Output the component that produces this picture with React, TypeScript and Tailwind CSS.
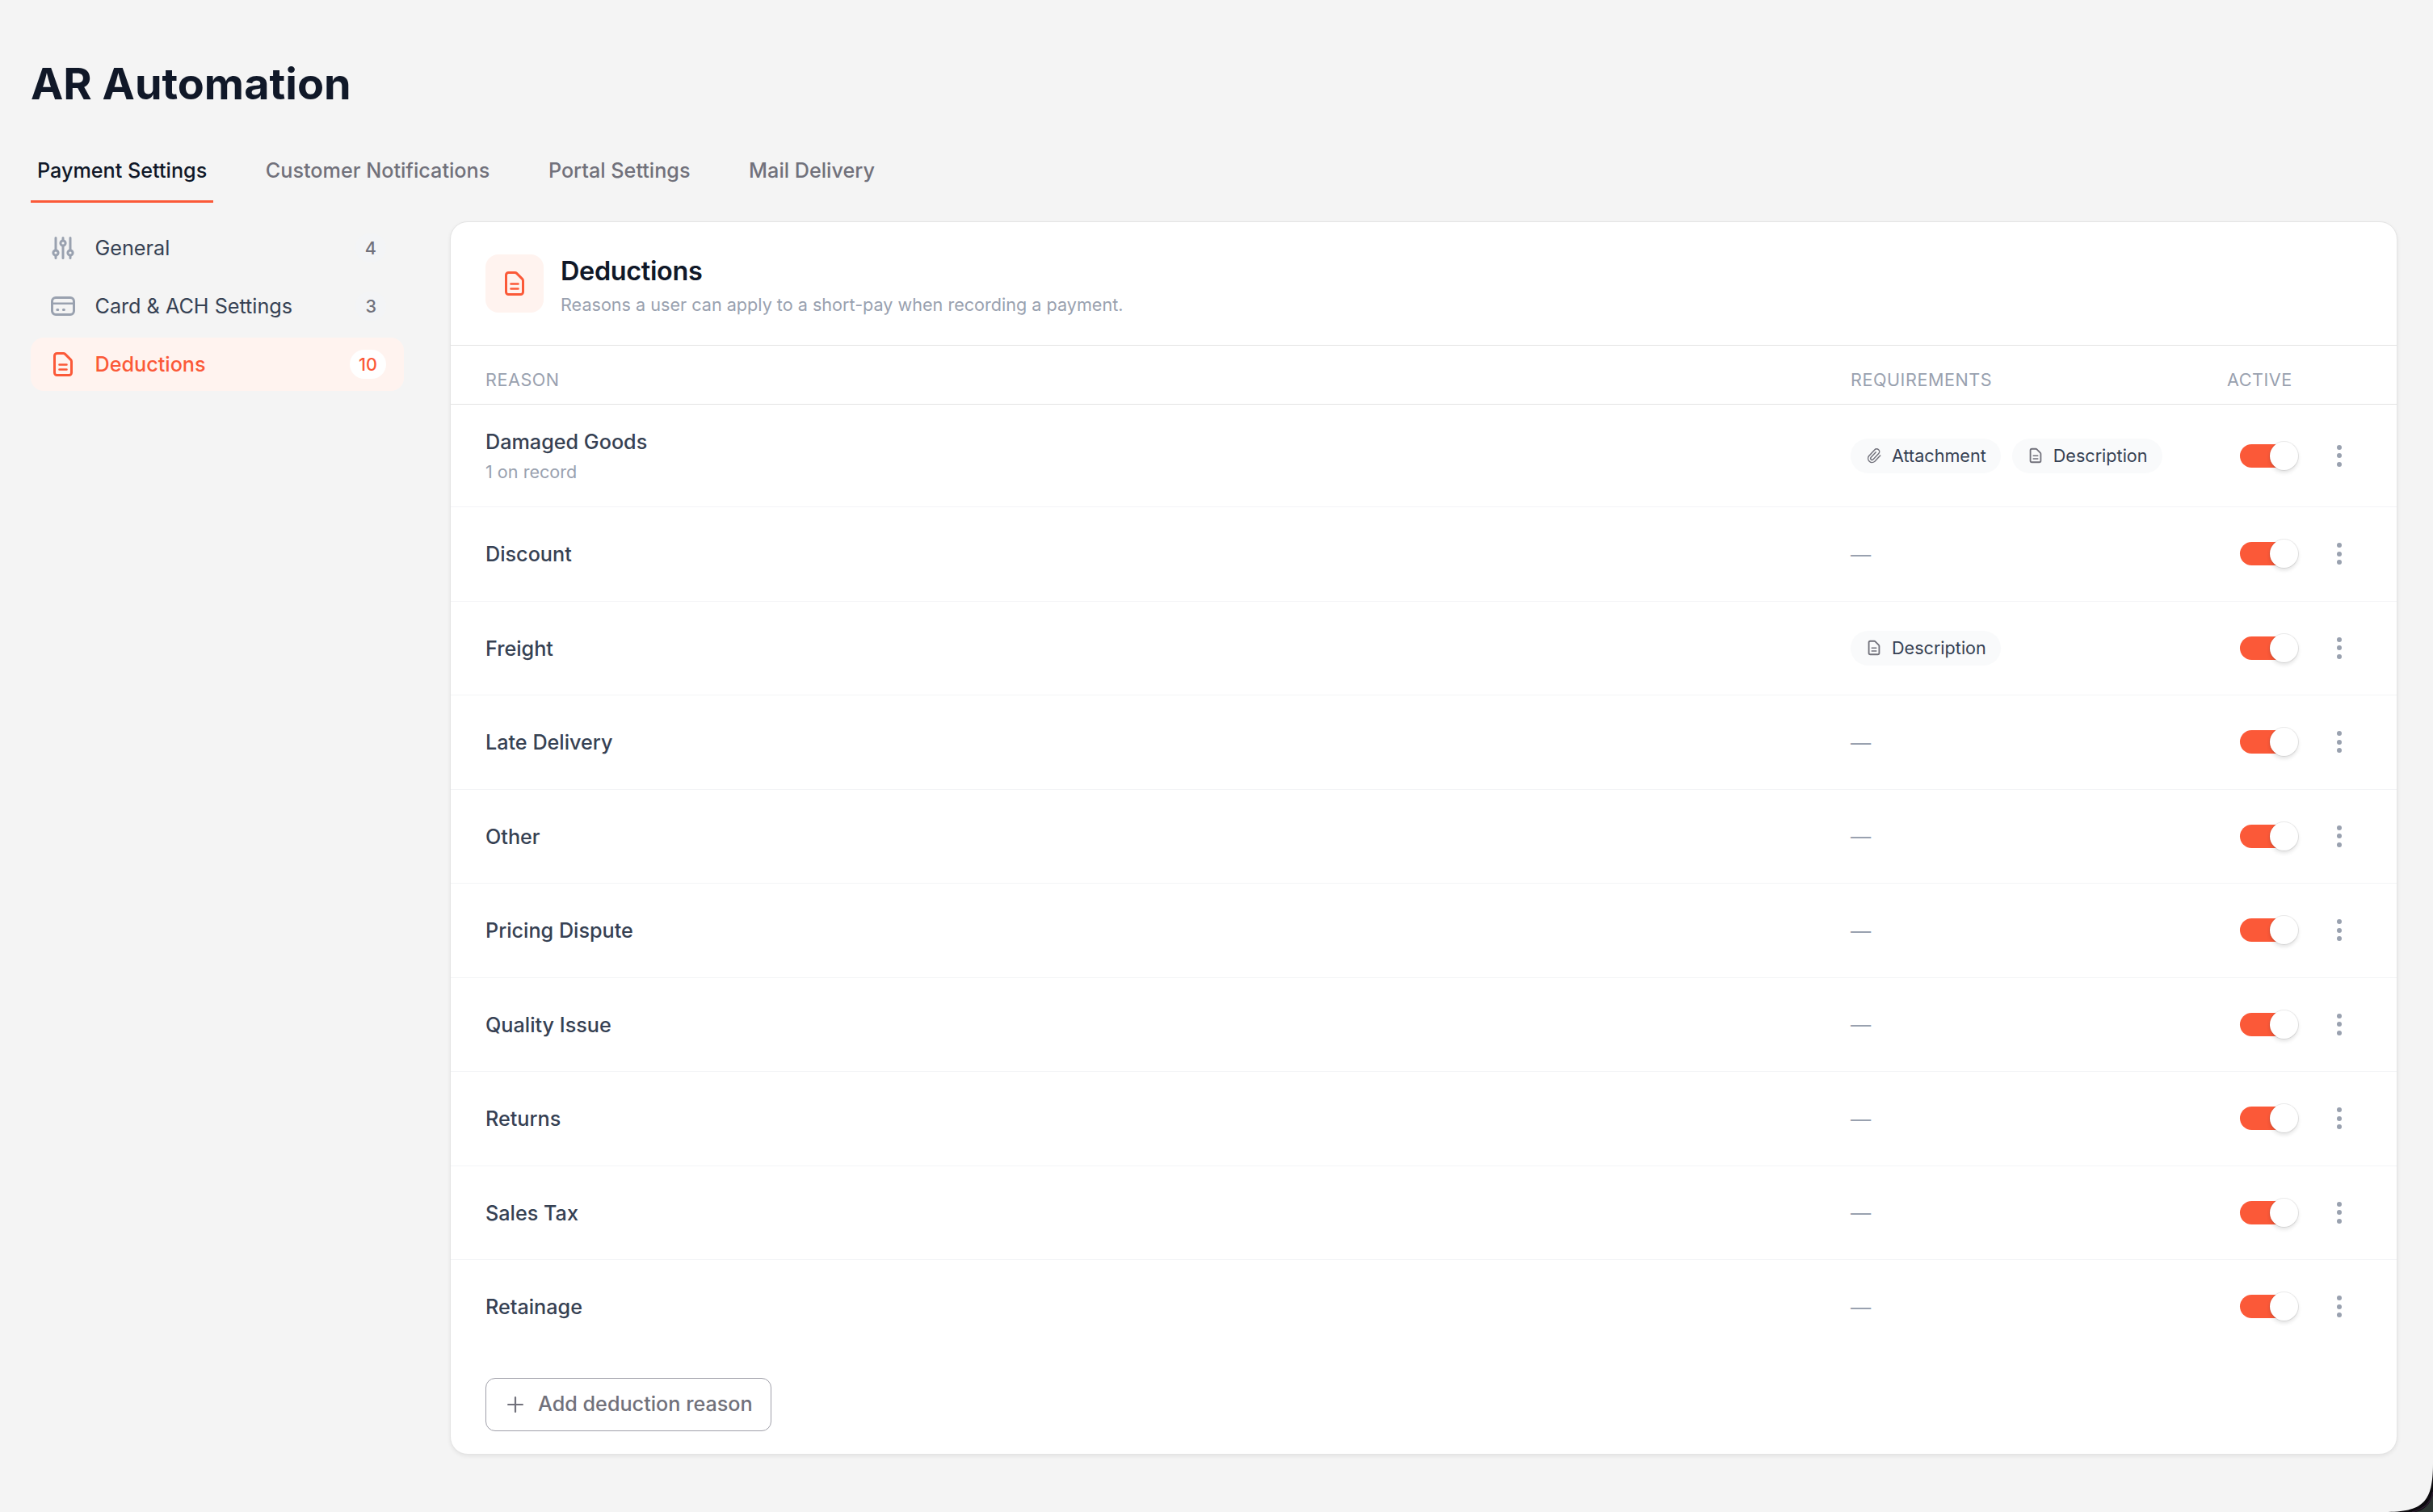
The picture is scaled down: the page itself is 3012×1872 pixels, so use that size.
import { useState } from "react";
import type { ReactNode } from "react";

type TRequirement = "Attachment" | "Description";

type TReason = {
    name: string;
    note?: string;
    requirements: TRequirement[];
};

const tabs = ["Payment Settings", "Customer Notifications", "Portal Settings", "Mail Delivery"];

const reasons: TReason[] = [
    { name: "Damaged Goods", note: "1 on record", requirements: ["Attachment", "Description"] },
    { name: "Discount", requirements: [] },
    { name: "Freight", requirements: ["Description"] },
    { name: "Late Delivery", requirements: [] },
    { name: "Other", requirements: [] },
    { name: "Pricing Dispute", requirements: [] },
    { name: "Quality Issue", requirements: [] },
    { name: "Returns", requirements: [] },
    { name: "Sales Tax", requirements: [] },
    { name: "Retainage", requirements: [] },
];

const Icon = ({ className, children }: { className: string; children: ReactNode }) => (
    <svg
        viewBox="0 0 36 36"
        fill="none"
        stroke="currentColor"
        strokeWidth="3"
        strokeLinecap="round"
        strokeLinejoin="round"
        className={className}
    >
        {children}
    </svg>
);

const DocIcon = ({ className }: { className: string }) => (
    <Icon className={className}>
        <path d="M10.5 4.5h8a3 3 0 0 1 2.1.9l7 7a3 3 0 0 1 .9 2.1v14a3 3 0 0 1-3 3h-15a3 3 0 0 1-3-3v-21a3 3 0 0 1 3-3z" />
        <path d="M13.5 18.5h9M13.5 24.5h9" strokeWidth="2.6" />
    </Icon>
);

const SlidersIcon = ({ className }: { className: string }) => (
    <Icon className={className}>
        <path d="M9 5.5v15M9 27.5v3M18 5.5v3M18 15.5v15M27 5.5v15M27 27.5v3" />
        <circle cx="9" cy="24" r="3.1" />
        <circle cx="18" cy="12" r="3.1" />
        <circle cx="27" cy="24" r="3.1" />
    </Icon>
);

const CardIcon = ({ className }: { className: string }) => (
    <Icon className={className}>
        <rect x="4.5" y="7.5" width="27" height="21" rx="4.5" />
        <path d="M4.5 14.8h27" strokeWidth="2.6" />
        <path d="M10.8 22.5h1M18.4 22.5h1" />
    </Icon>
);

const ClipIcon = ({ className }: { className: string }) => (
    <svg
        viewBox="0 0 24 24"
        fill="none"
        stroke="currentColor"
        strokeWidth="1.6"
        strokeLinecap="round"
        strokeLinejoin="round"
        className={className}
    >
        <path d="m20.4 12-7.4 7.9a5.4 5.4 0 0 1-7.9-7.3l7.7-8.3a3.75 3.75 0 0 1 5.5 5.1l-7.4 7.9a2.05 2.05 0 0 1-3-2.8l6.6-7.1" />
    </svg>
);

const menu = [
    { label: "General", count: 4, icon: SlidersIcon },
    { label: "Card & ACH Settings", count: 3, icon: CardIcon },
    { label: "Deductions", count: 10, icon: DocIcon },
];

const Chip = ({ label }: { label: TRequirement }) => (
    <span className="flex h-[43px] items-center gap-[11px] rounded-full bg-[#f9fafb] px-[18px] text-[21.6px] text-[#364153]">
        {label === "Attachment" ? (
            <ClipIcon className="size-[22px] text-[#71717b]" />
        ) : (
            <DocIcon className="size-[22px] text-[#71717b]" />
        )}
        {label}
    </span>
);

const Toggle = ({ on, onClick }: { on: boolean; onClick: () => void }) => (
    <button
        onClick={onClick}
        className={
            on
                ? "flex h-[29px] w-16 cursor-pointer items-center justify-end rounded-full bg-[#fb5938]"
                : "flex h-[29px] w-16 cursor-pointer items-center rounded-full bg-gray-300"
        }
    >
        <span className="-mr-2 size-[35px] shrink-0 rounded-full bg-white shadow-[0_0_0_1px_rgba(0,0,0,0.08),0_3px_5px_rgba(0,0,0,0.12)]" />
    </button>
);

const App = () => {
    const [activeTab, setActiveTab] = useState(tabs[0]);
    const [disabled, setDisabled] = useState<string[]>([]);

    const handleToggle = (name: string) => {
        setDisabled(
            disabled.includes(name) ? disabled.filter((item) => item !== name) : [...disabled, name]
        );
    };

    return (
        <div className="relative h-[1872px] w-[3012px] overflow-hidden bg-[#f4f4f4] pl-[38px] pr-[44px] pt-[71px] font-['Inter',sans-serif]">
            <h1 className="text-[54px] font-bold leading-[65px] text-[#101828]">AR Automation</h1>

            {/* Tabs */}
            <div className="mt-[55px] flex gap-[56.6px]">
                {tabs.map((tab) => (
                    <button
                        key={tab}
                        onClick={() => setActiveTab(tab)}
                        className={
                            tab === activeTab
                                ? "border-b-3 border-[#fb5938] px-2 pb-[17px] text-[25.2px] font-medium leading-10 text-[#101828]"
                                : "border-b-3 border-transparent px-2 pb-[17px] text-[25.2px] font-medium leading-10 text-[#71717b]"
                        }
                    >
                        {tab}
                    </button>
                ))}
            </div>

            <div className="mt-[23px] flex items-start gap-[57px]">
                {/* Sidebar */}
                <nav className="flex w-[462px] shrink-0 flex-col gap-1.5">
                    {menu.map(({ label, count, icon: MenuIcon }) => {
                        const active = label === "Deductions";
                        return (
                            <div
                                key={label}
                                className={
                                    active
                                        ? "flex h-[66px] items-center rounded-2xl bg-[#fff3ef] px-[22px] text-[#fb5938]"
                                        : "flex h-[66px] items-center rounded-2xl px-[22px] text-[#364153]"
                                }
                            >
                                <MenuIcon className={active ? "size-9" : "size-9 text-[#99a1af]"} />
                                <span
                                    className={
                                        active
                                            ? "ml-[21.5px] pt-0.5 text-[25.2px] font-medium"
                                            : "ml-[21.5px] pt-0.5 text-[25.2px]"
                                    }
                                >
                                    {label}
                                </span>
                                <span
                                    className={
                                        active
                                            ? "ml-auto flex h-9 items-center rounded-full bg-white px-[11px] text-[21.6px] font-medium"
                                            : "ml-auto flex h-9 items-center rounded-full bg-[#f3f4f6] px-3 text-[21.6px] font-medium text-[#71717b]"
                                    }
                                >
                                    {count}
                                </span>
                            </div>
                        );
                    })}
                </nav>

                {/* Deductions card */}
                <section className="min-w-0 flex-1 rounded-[22px] border border-[#e4e4e4] bg-white shadow-[0_2px_5px_rgba(0,0,0,0.07)]">
                    <header className="flex h-[153px] items-center gap-[21px] border-b border-[#e4e4e4] px-[43px]">
                        <div className="flex size-[72px] items-center justify-center rounded-2xl bg-[#fff3ef] text-[#fb5938]">
                            <DocIcon className="size-9" />
                        </div>
                        <div className="pt-[3px]">
                            <h2 className="text-[32.4px] font-semibold leading-[48px] tracking-[-0.01em] text-[#101828]">
                                Deductions
                            </h2>
                            <p className="text-[21.6px] leading-[34px] text-[#99a1af]">
                                Reasons a user can apply to a short-pay when recording a payment.
                            </p>
                        </div>
                    </header>

                    <div className="grid grid-cols-[1fr_466px_110px_58px] border-b border-[#e4e4e4] pb-3 pl-[43px] pr-[42px] pt-6 text-[21.6px] uppercase leading-9 tracking-wide text-[#99a1af]">
                        <span>Reason</span>
                        <span>Requirements</span>
                        <span>Active</span>
                    </div>

                    {reasons.map((reason) => (
                        <div
                            key={reason.name}
                            className={
                                reason.note
                                    ? "grid h-[127px] grid-cols-[1fr_466px_110px_58px] items-center border-b border-[#f3f4f6] pl-[43px] pr-[42px]"
                                    : "grid h-[116.5px] grid-cols-[1fr_466px_110px_58px] items-center border-b border-[#f3f4f6] pl-[43px] pr-[42px] last-of-type:border-transparent"
                            }
                        >
                            <div className="pt-0.5">
                                <p className="text-[25.2px] font-medium leading-[39px] text-[#364153]">{reason.name}</p>
                                {reason.note && (
                                    <p className="text-[21.6px] leading-[35px] text-[#99a1af]">{reason.note}</p>
                                )}
                            </div>
                            <div className="flex gap-3.5">
                                {reason.requirements.map((item) => (
                                    <Chip key={item} label={item} />
                                ))}
                                {reason.requirements.length === 0 && (
                                    <span className="pt-0.5 text-[25.2px] leading-[38px] text-[#99a1af]">—</span>
                                )}
                            </div>
                            <div className="pl-4">
                                <Toggle
                                    on={!disabled.includes(reason.name)}
                                    onClick={() => handleToggle(reason.name)}
                                />
                            </div>
                            <button className="flex cursor-pointer flex-col items-center gap-[4.5px]">
                                <span className="size-1.5 rounded-full bg-[#99a1af]" />
                                <span className="size-1.5 rounded-full bg-[#99a1af]" />
                                <span className="size-1.5 rounded-full bg-[#99a1af]" />
                            </button>
                        </div>
                    ))}

                    <footer className="px-[43px] pb-7 pt-[29px]">
                        <button className="flex h-[66px] cursor-pointer items-center rounded-xl border border-[#9f9fa9] pl-[26px] pr-[22px] text-[25.2px] font-medium text-[#71717b]">
                            <svg viewBox="0 0 20 20" className="mr-[18px] size-5" stroke="currentColor" strokeWidth="2.2" strokeLinecap="round">
                                <path d="M10 1.1v17.8M1.1 10h17.8" />
                            </svg>
                            Add deduction reason
                        </button>
                    </footer>
                </section>
            </div>

            {/* Rounded window corner */}
            <svg viewBox="0 0 60 60" className="absolute bottom-0 right-0 size-[60px]">
                <path d="M60 0v60H0C48 60 60 48 60 0z" fill="#0c0a0e" />
                <path d="M60 38v22H38C49 58 57 50 60 38z" fill="#2d3632" />
                <path d="M60 35C57 49 50 56 34 60" fill="none" stroke="#2c1c30" strokeWidth="1.5" />
            </svg>
        </div>
    );
};

export default App;
